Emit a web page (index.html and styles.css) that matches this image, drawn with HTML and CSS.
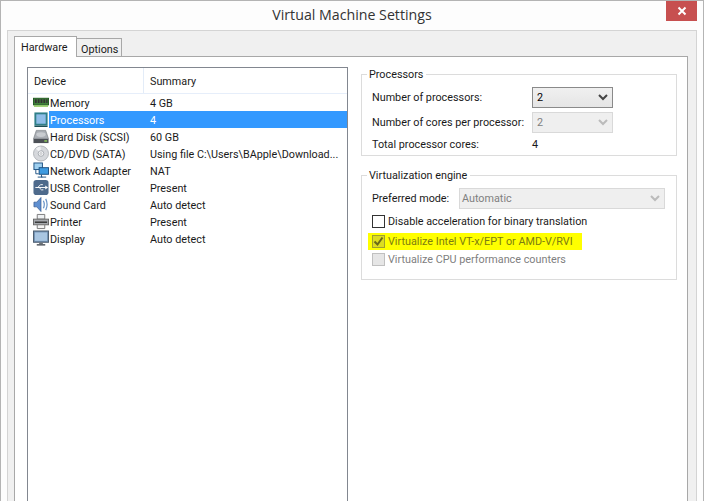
FILE: index.html
```html
<!DOCTYPE html>
<html lang="en">
<head>
  <meta charset="UTF-8" />
  <meta name="viewport" content="width=device-width, initial-scale=1.0"/>
  <title>Virtual Machine Settings</title>
  <link rel="stylesheet" href="styles.css">
</head>
<body>

<div class="window">
  <div class="titlebar">
    <span></span>
    <div class="title">Virtual Machine Settings</div>
    <div class="btn-close">
      <svg width="10" height="10" viewBox="0 0 10 10"><path d="M1.5 1.5l7 7M8.5 1.5l-7 7" stroke="#fff" stroke-width="2"/></svg>
    </div>
  </div>

  <div class="frame">
    <div class="tabs">
      <div class="tab active">Hardware</div>
      <div class="tab">Options</div>
    </div>

    <div class="tab-pane">
      <!-- Device list -->
      <div class="device-list">
        <div class="list-header">
          <div class="col-device">Device</div>
          <div class="col-summary">Summary</div>
        </div>

        <div class="device-row">
          <svg class="icon" viewBox="0 0 17 17"><rect x="0.500" y="4" width="16" height="7" fill="#3f7f3a" stroke="#1f5a1f"/><path d="M2 5h2v4H2zM5 5h2v4H5zM8 5h2v4H8zM11 5h2v4h-2zM14 5h1.500v4H14z" fill="#333"/><path d="M1 11.500h15v1.500H1z" fill="#7fc24a"/></svg>
          <div class="cells"><div class="cell-name">Memory</div><div>4 GB</div></div>
        </div>
        <div class="device-row selected">
          <svg class="icon" viewBox="0 0 17 17"><rect x="1.500" y="1" width="14" height="14" fill="#2f7f88"/><rect x="3.500" y="3" width="10" height="10" fill="#8fbde8"/><path d="M1.500 15h14v1.500h-14z" fill="#1d4f55"/></svg>
          <div class="cells"><div class="cell-name">Processors</div><div>4</div></div>
        </div>
        <div class="device-row">
          <svg class="icon" viewBox="0 0 17 17"><path d="M3.500 2h10l3 9H.5z" fill="#a9adb3" stroke="#6d7278" stroke-width=".6"/><ellipse cx="8.500" cy="6.500" rx="5" ry="2.500" fill="#c9ccd0"/><rect x="0.500" y="11" width="16" height="4.500" fill="#4c5056"/><rect x="12" y="12.500" width="3" height="1.500" fill="#8fd05a"/></svg>
          <div class="cells"><div class="cell-name">Hard Disk (SCSI)</div><div>60 GB</div></div>
        </div>
        <div class="device-row">
          <svg class="icon" viewBox="0 0 17 17"><circle cx="8.500" cy="8.500" r="8" fill="#d6d8dc" stroke="#a4a8ae" stroke-width=".8"/><path d="M8.500 8.500L3 3.500A7.500 7.500 0 0 1 8 1z" fill="#f2f3f5"/><circle cx="8.500" cy="8.500" r="3" fill="#f4f5f6" stroke="#9a9ea4" stroke-width=".8"/><circle cx="8.500" cy="8.500" r="1" fill="#fff" stroke="#8a8e94" stroke-width=".5"/></svg>
          <div class="cells"><div class="cell-name">CD/DVD (SATA)</div><div>Using file C:\Users\BApple\Download...</div></div>
        </div>
        <div class="device-row">
          <svg class="icon" viewBox="0 0 17 17"><rect x="1" y="0.500" width="9" height="7" fill="#9fd0f0" stroke="#1c4f80"/><rect x="6.500" y="5.500" width="10" height="7" fill="#3f9be0" stroke="#1c4f80"/><path d="M3 8v4h3M9 13v2.500h5M5 15.500h5" stroke="#1c4f80" fill="none"/></svg>
          <div class="cells"><div class="cell-name">Network Adapter</div><div>NAT</div></div>
        </div>
        <div class="device-row">
          <svg class="icon" viewBox="0 0 17 17"><rect x="0.500" y="0.500" width="16" height="16" rx="3" fill="#4e6a8c"/><path d="M2.500 8.500h11M5 8.500l3-3h2.500M6.500 8.500l2.500 2.500h2" stroke="#fff" fill="none"/><path d="M13 6.500l3 2-3 2z" fill="#fff"/></svg>
          <div class="cells"><div class="cell-name">USB Controller</div><div>Present</div></div>
        </div>
        <div class="device-row">
          <svg class="icon" viewBox="0 0 17 17"><path d="M1 6h3l4.500-5v15L4 11H1z" fill="#5f8fd0" stroke="#2c4f88" stroke-width=".7"/><path d="M11 4.500q2 4 0 8M13.500 2.500q3 6 0 12" fill="none" stroke="#6a94c8" stroke-width="1.300"/></svg>
          <div class="cells"><div class="cell-name">Sound Card</div><div>Auto detect</div></div>
        </div>
        <div class="device-row">
          <svg class="icon" viewBox="0 0 17 17"><path d="M4.500 1h8v5h-8z" fill="#eef0f2" stroke="#777"/><rect x="0.500" y="6" width="16" height="6" fill="#a6a9ae" stroke="#666"/><rect x="2" y="8.500" width="13" height="1.500" fill="#333"/><path d="M4.500 12h8v4h-8z" fill="#f4f4f4" stroke="#777"/></svg>
          <div class="cells"><div class="cell-name">Printer</div><div>Present</div></div>
        </div>
        <div class="device-row">
          <svg class="icon" viewBox="0 0 17 17"><rect x="0.500" y="0.500" width="16" height="12" fill="#6f8fb0" stroke="#4a5a6c"/><rect x="2" y="2" width="13" height="9" fill="#a9c6e2"/><path d="M6.500 13h4v1.500h-4z" fill="#6c7278"/><path d="M4 14.500h9V16H4z" fill="#4a5058"/></svg>
          <div class="cells"><div class="cell-name">Display</div><div>Auto detect</div></div>
        </div>
      </div>

      <!-- Settings panel -->
      <div class="settings">
        <fieldset class="group group-processors">
          <legend>Processors</legend>
          <div class="form-row first-row">
            <div class="form-label">Number of processors:</div>
            <div class="combo combo-small focus">2<svg width="10" height="7" viewBox="0 0 10 7"><path d="M1 1l4 4 4-4" fill="none" stroke="#444" stroke-width="2"/></svg></div>
          </div>
          <div class="form-row">
            <div class="form-label">Number of cores per processor:</div>
            <div class="combo combo-small disabled">2<svg width="10" height="7" viewBox="0 0 10 7"><path d="M1 1l4 4 4-4" fill="none" stroke="#bbb" stroke-width="2"/></svg></div>
          </div>
          <div class="form-row total-row">
            <div class="form-label">Total processor cores:</div>
            <div>4</div>
          </div>
        </fieldset>

        <fieldset class="group group-engine">
          <legend>Virtualization engine</legend>
          <div class="form-row mode-row">
            <div class="mode-label">Preferred mode:</div>
            <div class="combo combo-wide disabled">Automatic<svg width="10" height="7" viewBox="0 0 10 7"><path d="M1 1l4 4 4-4" fill="none" stroke="#bbb" stroke-width="2"/></svg></div>
          </div>
          <div class="check-row first-check">
            <span class="checkbox"></span>Disable acceleration for binary translation
          </div>
          <div class="check-row highlight">
            <span class="checkbox checked">
              <svg width="11" height="11" viewBox="0 0 11 11"><path d="M1.500 5.500l3 3 5-7" fill="none" stroke="#6a6a18" stroke-width="2"/></svg>
            </span>Virtualize Intel VT-x/EPT or AMD-V/RVI
          </div>
          <div class="check-row muted">
            <span class="checkbox off"></span>Virtualize CPU performance counters
          </div>
        </fieldset>
      </div>
    </div>
  </div>
</div>

</body>
</html>
```

FILE: styles.css
```css
* {
  box-sizing: border-box;
}

html, body {
  margin: 0;
  height: 501px;
  overflow: hidden;
}

body {
  font-family: "Roboto", "Open Sans", sans-serif;
  font-size: 10.8px;
  color: #1a1a1a;
  background: #fff;
}

.window {
  display: flex;
  flex-direction: column;
  height: 501px;
  border: 1px solid #b4b4b4;
  border-bottom: none;
  background: #fdfdfd;
}

.titlebar {
  display: grid;
  grid-template-columns: 1fr auto 1fr;
  height: 29px;
}

.title {
  font-family: "Open Sans", sans-serif;
  font-size: 14.2px;
  line-height: 28px;
  color: #333;
}

.btn-close {
  justify-self: end;
  display: flex;
  align-items: center;
  justify-content: center;
  width: 31px;
  height: 20px;
  margin-right: 6px;
  background: #c75050;
}

.frame {
  flex: 1;
  display: flex;
  flex-direction: column;
  min-height: 0;
  margin: 0 6px;
  padding: 6px 8px 0 6px;
  border: 1px solid #d4d4d4;
  border-bottom: none;
  background: #f0f0f0;
}

.tabs {
  display: flex;
  align-items: flex-end;
  height: 20px;
  margin-bottom: -1px;
  position: relative;
}

.tab {
  width: 45px;
  height: 19px;
  padding: 2px 0 0 4px;
  line-height: 18px;
  border: 1px solid #a8a8a8;
  border-left: none;
  background: #f0f0f0;
}

.tab.active {
  height: 21px;
  width: 63px;
  padding: 2px 6px 0;
  border-left: 1px solid #a8a8a8;
  border-bottom: none;
  background: #fff;
}

.tab-pane {
  flex: 1;
  display: flex;
  gap: 13px;
  min-height: 0;
  padding: 10px 10px 0 12px;
  border: 1px solid #a8a8a8;
  border-bottom: none;
  background: #fff;
}

.device-list {
  width: 321px;
  border: 1px solid #828790;
  border-bottom: none;
  background: #fff;
}

.list-header {
  display: flex;
  height: 26px;
  line-height: 27px;
  padding-left: 6px;
  border-bottom: 1px solid #e6eefa;
}

.col-device {
  width: 110px;
  border-right: 1px solid #e3ecf8;
}

.col-summary {
  padding-left: 6px;
}

.device-row {
  display: flex;
  height: 17px;
  line-height: 19px;
}

.icon {
  flex: none;
  width: 16px;
  height: 17px;
  margin-left: 5px;
}

.cells {
  flex: 1;
  display: flex;
  white-space: nowrap;
}

.cell-name {
  width: 101px;
  padding-left: 1px;
}

.device-row.selected .cells {
  background: #3399ff;
  color: #fff;
}

.settings {
  display: flex;
  flex-direction: column;
  width: 316px;
  margin-top: -1px;
}

.group {
  margin: 0;
  padding: 0 10px 0 10px;
  border: 1px solid #dcdcdc;
  min-width: 0;
}

.group legend {
  padding: 2px 3px 0 2px;
  margin-left: -5px;
  line-height: 14px;
}

.group-processors {
  height: 90px;
}

.group-engine {
  height: 113px;
  margin-top: 11px;
}

.form-row {
  display: flex;
  align-items: center;
  height: 25px;
  white-space: nowrap;
}

.first-row {
  margin-top: 3px;
}

.form-label {
  width: 160px;
}

.total-row {
  height: 18px;
}

.mode-row {
  height: 21px;
  margin-top: 5px;
}

.mode-label {
  width: 87px;
}

.combo {
  display: flex;
  align-items: center;
  justify-content: space-between;
  height: 21px;
  padding: 0 4px;
  border: 1px solid #acacac;
  background: linear-gradient(#f0f0f0, #e5e5e5);
}

.combo-small {
  width: 81px;
}

.combo-wide {
  width: 206px;
  padding-left: 2px;
}

.combo.focus {
  border-color: #8a8a8a;
  color: #000;
}

.combo.disabled {
  border-color: #d9d9d9;
  background: #efefef;
  color: #808080;
}

.check-row {
  display: flex;
  align-items: center;
  gap: 3px;
  height: 19px;
  white-space: nowrap;
}

.first-check {
  margin-top: 3px;
}

.checkbox {
  flex: none;
  display: flex;
  align-items: center;
  justify-content: center;
  width: 13px;
  height: 13px;
  border: 1px solid #333;
  background: #fff;
}

.checkbox.checked {
  border-color: #a0a030;
  background: #dcdc20;
}

.checkbox.off {
  border-color: #c0c0c0;
  background: #e6e6e6;
}

.highlight {
  width: 214px;
  height: 17px;
  margin-top: 2px;
  margin-left: -4px;
  padding-left: 4px;
  background: #ffff00;
  color: #7c7c10;
}

.muted {
  height: 18px;
  color: #808080;
}
```
